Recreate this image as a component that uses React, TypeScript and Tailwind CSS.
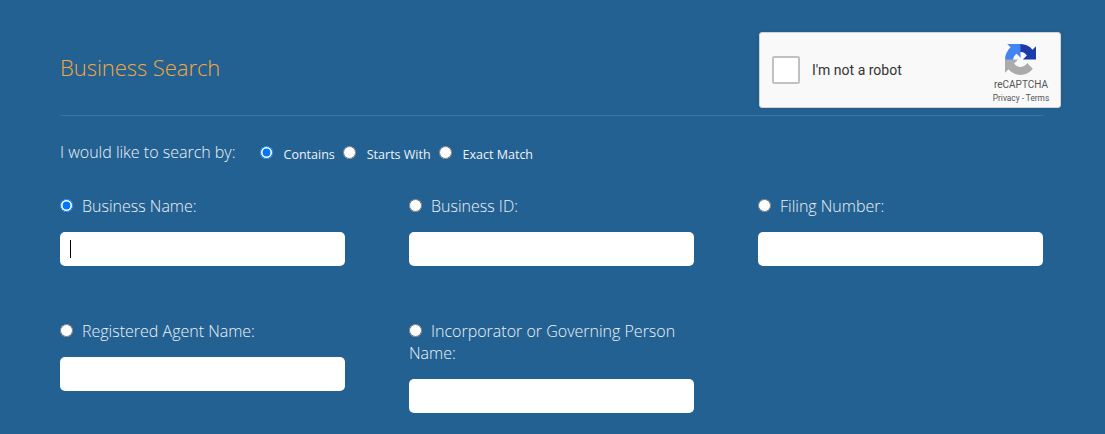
import React from 'react';

const openSans = "font-['Open_Sans',sans-serif]";

function Field({ label, checked, caret }: { label: string; checked?: boolean; caret?: boolean }) {
  return (
    <div className="flex flex-col">
      <label className="block text-[16px] leading-[22px] font-light text-[#eef3f8] mb-[15px]">
        <input type="radio" name="field" defaultChecked={checked} className="w-[13px] h-[13px] m-0 mr-[9px] align-[0px]" />
        {label}
      </label>
      <div className="relative h-[34px] w-[285px] rounded-[5px] bg-white">
        {caret && <span className="absolute left-[10px] top-[8px] h-[18px] w-px bg-black" />}
      </div>
    </div>
  );
}

function SearchMode({ label, checked, className }: { label: string; checked?: boolean; className: string }) {
  return (
    <label className={`flex items-start text-[12.5px] leading-[18px] ${className}`}>
      <input type="radio" name="mode" defaultChecked={checked} className="w-[13px] h-[13px] mt-[5px] ml-0 mb-0 mr-[11px]" />
      <span className="mt-[5px]">{label}</span>
    </label>
  );
}

function Captcha() {
  return (
    <div className="flex h-[76px] w-[302px] shrink-0 rounded-[3px] border border-[#d3d3d3] bg-[#f9f9f9] shadow-[0_0_4px_rgba(0,0,0,0.08)] font-['Roboto',sans-serif]">
      <div className="flex items-center">
        <div className="ml-[12px] h-[28px] w-[28px] rounded-[2px] border-2 border-[#c1c1c1] bg-white" />
        <span className="ml-[12px] text-[14px] text-[#333]">I'm not a robot</span>
      </div>
      <div className="ml-auto mr-[11px] flex w-[56px] flex-col items-center pt-[11px] text-[#555]">
        <svg width="31" height="31" viewBox="0 0 64 64" className="mb-[1px] -translate-x-[1px]">
          <path d="M64 31.955l-.033-1.37V4.687l-7.16 7.16C50.948 4.674 42.033.093 32.05.093c-10.4 0-19.622 4.96-25.458 12.64l11.736 11.86c1.15-2.127 2.784-3.955 4.768-5.327 2.05-1.6 4.952-2.908 9.003-2.908.49 0 .867.057 1.144.165 5.02.397 9.37 3.167 11.93 7.19l-8.308 8.31c10.523-.04 22.41-.066 27.136.017" fill="#1c3aa9" />
          <path d="M31.955 0l-1.37.033H4.687l7.16 7.16C4.674 13.052.093 21.967.093 31.95c0 1.400.09 2.800.26 4.100l16.400-.100c-.100-.600-.150-1.300-.150-2.900 0-.49.057-.867.165-1.144.397-5.02 3.167-9.37 7.19-11.93l8.31 8.308C31.98 16.61 31.955 4.726 32.038 0" fill="#4285f4" />
          <path d="M.002 31.955l.033 1.37v25.898l7.16-7.16c5.86 7.173 14.775 11.754 24.76 11.754 10.4 0 19.622-4.96 25.458-12.64l-11.736-11.86c-1.15 2.127-2.784 3.955-4.768 5.327-2.05 1.6-4.952 2.908-9.003 2.908-.49 0-.867-.057-1.144-.165-5.02-.397-9.37-3.167-11.93-7.19l8.31-8.308C22.62 31.93 10.733 31.9 .002 31.955" fill="#ababab" />
        </svg>
        <span className="mt-[3px] text-[10px] leading-[12px]">reCAPTCHA</span>
        <span className="mt-[2px] text-[8.3px] leading-[10px] whitespace-nowrap">Privacy - Terms</span>
      </div>
    </div>
  );
}

export default function App() {
  return (
    <div className={`${openSans} h-[434px] w-[1105px] overflow-hidden bg-[#236192] pl-[60px] pr-[44px] pt-[32px]`}>
      <div className="flex items-center justify-between h-[76px]">
        <h1 className="pb-[6px] text-[22px] tracking-[-0.05px] font-light text-[#f4a83a]">Business Search</h1>
        <Captcha />
      </div>
      <div className="mt-[7px] mr-[17px] border-t border-[#3a75a3]" />
      <div className="mt-[25px] flex items-start text-[#eef3f8]">
        <span className="text-[16px] leading-[22px] font-light">I would like to search by:</span>
        <SearchMode label="Contains" checked className="ml-[24px]" />
        <SearchMode label="Starts With" className="ml-[8px]" />
        <SearchMode label="Exact Match" className="ml-[8px]" />
      </div>
      <div className="mt-[31px] grid grid-cols-[285px_285px_285px] gap-x-[64px] gap-y-[54px]">
        <Field label="Business Name:" checked caret />
        <Field label="Business ID:" />
        <Field label="Filing Number:" />
        <Field label="Registered Agent Name:" />
        <Field label="Incorporator or Governing Person Name:" />
      </div>
    </div>
  );
}
